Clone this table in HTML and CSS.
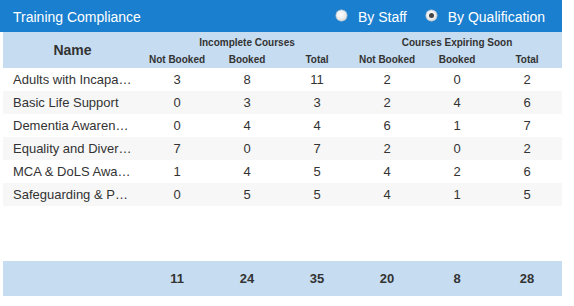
FILE: index.html
```html
<!DOCTYPE html>
<html>
<head>
<meta charset="utf-8">
<link rel="stylesheet" href="styles.css">
</head>
<body>
<div class="panel">
  <div class="titlebar">
    <div class="title">Training Compliance</div>
    <div class="options">
      <label class="opt"><span class="radio"></span>By Staff</label>
      <label class="opt"><span class="radio checked"></span>By Qualification</label>
    </div>
  </div>
  <div class="grid">
    <div class="thead">
      <div class="name-head">Name</div>
      <div class="group g1">Incomplete Courses</div>
      <div class="group g2">Courses Expiring Soon</div>
      <div class="sub">Not Booked</div>
      <div class="sub">Booked</div>
      <div class="sub">Total</div>
      <div class="sub">Not Booked</div>
      <div class="sub">Booked</div>
      <div class="sub">Total</div>
    </div>
    <div class="tbody">
      <div class="row"><div class="name">Adults with Incapacity</div><div>3</div><div>8</div><div>11</div><div>2</div><div>0</div><div>2</div></div>
      <div class="row"><div class="name">Basic Life Support</div><div>0</div><div>3</div><div>3</div><div>2</div><div>4</div><div>6</div></div>
      <div class="row"><div class="name">Dementia Awareness</div><div>0</div><div>4</div><div>4</div><div>6</div><div>1</div><div>7</div></div>
      <div class="row"><div class="name">Equality and Diversity</div><div>7</div><div>0</div><div>7</div><div>2</div><div>0</div><div>2</div></div>
      <div class="row"><div class="name">MCA &amp; DoLS Awareness</div><div>1</div><div>4</div><div>5</div><div>4</div><div>2</div><div>6</div></div>
      <div class="row"><div class="name">Safeguarding &amp; Protection</div><div>0</div><div>5</div><div>5</div><div>4</div><div>1</div><div>5</div></div>
    </div>
    <div class="row tfoot"><div class="name"></div><div>11</div><div>24</div><div>35</div><div>20</div><div>8</div><div>28</div></div>
  </div>
</div>
</body>
</html>
```
FILE: styles.css
```css
html, body {
  margin: 0;
  padding: 0;
  background: #ffffff;
}
body {
  font-family: "Liberation Sans", Arial, sans-serif;
  color: #333333;
}
.panel {
  width: 562px;
}
.titlebar {
  height: 32px;
  background: #1a7fcf;
  color: #ffffff;
  display: flex;
  align-items: center;
  justify-content: space-between;
  padding: 0 17px 0 13px;
  box-sizing: border-box;
  font-size: 14px;
}
.title {
  padding-top: 1px;
}
.options {
  display: flex;
  gap: 19px;
  padding-top: 1px;
}
.opt {
  display: flex;
  align-items: center;
  gap: 11px;
}
.radio {
  width: 11px;
  height: 11px;
  border-radius: 50%;
  background: radial-gradient(circle at 45% 40%, #ffffff 0%, #eeeeee 45%, #c8c8c8 100%);
  box-shadow: 0 0 0 0.5px #b8c4d0;
  position: relative;
  margin-top: -3px;
}
.radio.checked::after {
  content: "";
  position: absolute;
  left: 3px;
  top: 3px;
  width: 5px;
  height: 5px;
  border-radius: 50%;
  background: #444444;
}
.grid {
  padding-left: 3px;
}
.thead {
  display: grid;
  grid-template-columns: 139px repeat(6, 70px);
  grid-template-rows: 19px 17px;
  background: #c6dcf1;
  font-size: 10px;
  font-weight: bold;
}
.name-head {
  grid-row: 1 / 3;
  grid-column: 1;
  display: flex;
  align-items: center;
  justify-content: center;
  font-size: 14px;
  padding-bottom: 1px;
}
.group {
  display: flex;
  align-items: flex-end;
  justify-content: center;
  padding-bottom: 3px;
}
.g1 { grid-column: 2 / 5; }
.g2 { grid-column: 5 / 8; }
.sub {
  display: flex;
  align-items: center;
  justify-content: center;
  padding-bottom: 1px;
}
.tbody {
  height: 193px;
}
.row {
  display: grid;
  grid-template-columns: 139px repeat(6, 70px);
  height: 23px;
  align-items: center;
  font-size: 13px;
  text-align: center;
}
.tbody .row:nth-child(even) {
  background: #f7f7f7;
}
.row .name {
  text-align: left;
  padding: 0 10px;
  white-space: nowrap;
  overflow: hidden;
  text-overflow: ellipsis;
}
.tfoot {
  height: 35px;
  background: #c6dcf1;
  font-weight: bold;
}
```
